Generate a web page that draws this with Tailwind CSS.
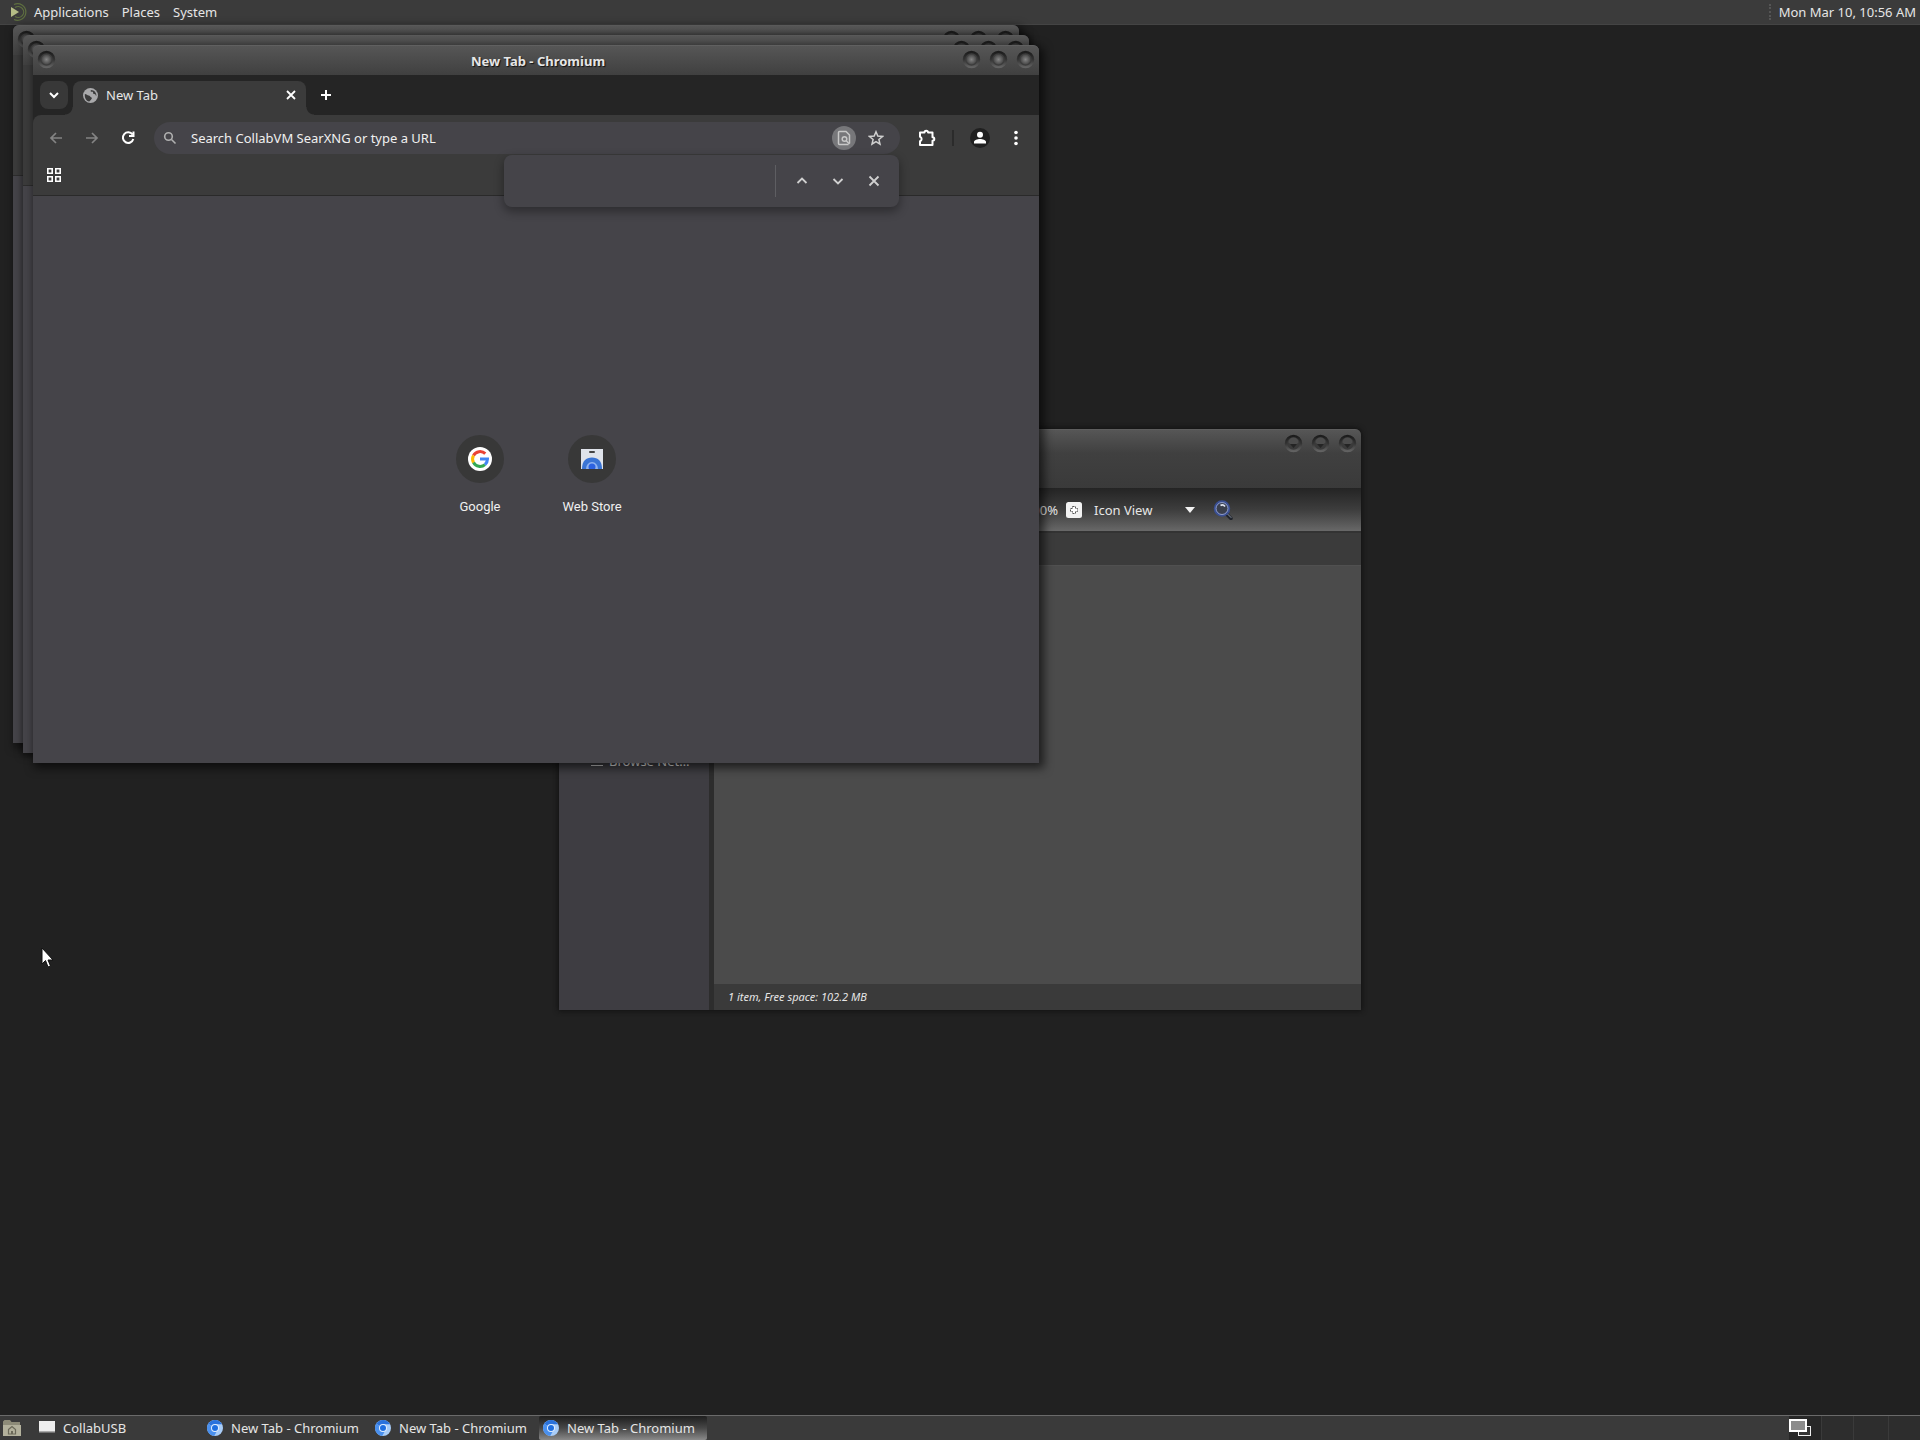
<!DOCTYPE html>
<html lang="en">
<head>
    <meta charset="UTF-8">
    <meta name="viewport" content="width=device-width, initial-scale=1.0">
    <title>Desktop</title>
    <script src="https://cdn.jsdelivr.net/npm/@tailwindcss/browser@4"></script>
</head>
<body class="h-screen flex flex-col overflow-hidden bg-[#212121] text-[#e6e6e6] text-[13px] leading-5 font-['Noto_Sans',sans-serif]">

    <!-- Shared shapes -->
    <svg class="absolute w-0 h-0">
        <defs>
            <linearGradient id="ring" x1="0" y1="0" x2="0" y2="1">
                <stop offset="0" stop-color="#1c1c1c"/>
                <stop offset="0.5" stop-color="#343434"/>
                <stop offset="1" stop-color="#626262"/>
            </linearGradient>
            <radialGradient id="knob">
                <stop offset="0" stop-color="#858585"/>
                <stop offset="1" stop-color="#474747"/>
            </radialGradient>
        </defs>
        <symbol id="window-button" viewBox="0 0 19 19">
            <circle cx="9.5" cy="9.5" r="7.5" fill="#3c3c3c" stroke="url(#ring)" stroke-width="2.5"/>
            <circle cx="9.5" cy="9.5" r="5" fill="url(#knob)"/>
        </symbol>
        <symbol id="window-button-idle" viewBox="0 0 19 19">
            <circle cx="9.5" cy="9.5" r="7.5" fill="#3a3a3a" stroke="url(#ring)" stroke-width="2.5"/>
            <path d="M4.5 8.5a5 5 0 0 1 10 0L9.5 13z" fill="#4c4c4c"/>
            <path d="M6 10h7l-3.500 4z" fill="#242424"/>
        </symbol>
        <symbol id="chromium" viewBox="0 0 16 16">
            <circle cx="8" cy="8" r="8" fill="#a9cdf8"/>
            <path d="M8 8 1.200 3.800A8 8 0 0 1 15 4.200H8z" fill="#2a72dc"/>
            <path d="M1.200 3.800A8 8 0 0 0 7.200 16L10.500 10 8 8z" fill="#4a90ee"/>
            <circle cx="8" cy="8" r="4" fill="#e2eeff"/>
            <circle cx="8" cy="8" r="3" fill="#1f6fe0"/>
        </symbol>
    </svg>

    <!-- Top panel -->
    <header class="shrink-0 h-[25px] flex items-center justify-between pl-2.5 pr-1 bg-[#3b3b3b] border-b border-[#444]">
        <nav class="flex items-center gap-[13px]">
            <button class="flex items-center gap-1.5">
                <svg class="w-[18px] h-[18px]" viewBox="0 0 18 18" fill="none">
                    <path d="M4 1.500a8.300 8.300 0 1 1 0 15" stroke="#5f7040" stroke-width="1.200"/>
                    <path d="M5 4.500a5.500 5.500 0 1 1 0 9" stroke="#5f7040" stroke-width="1.200"/>
                    <path d="M1 4v10l8-5z" fill="#b5bd86"/>
                </svg>
                <span>Applications</span>
            </button>
            <button>Places</button>
            <button>System</button>
        </nav>
        <div class="flex items-center gap-2">
            <span class="w-0.5 h-4 border-l-2 border-dotted border-[#555]"></span>
            <time>Mon Mar 10, 10:56 AM</time>
        </div>
    </header>

    <!-- Desktop -->
    <main class="relative flex-1">

        <!-- File manager -->
        <section class="absolute left-[559px] top-[404px] w-[802px] h-[581px] flex flex-col overflow-hidden rounded-t-md bg-[#3b3b3b] shadow-[0_0_5px_1px_#111]">
            <div class="h-[59px] flex items-start justify-end gap-2 pt-1 pr-1 bg-linear-to-b from-[#565656] via-[#404040] via-40% to-[#3a3a3a] border-t border-[#5e5e5e]">
                <button aria-label="Minimize"><svg class="w-[19px] h-[19px]"><use href="#window-button-idle"/></svg></button>
                <button aria-label="Maximize"><svg class="w-[19px] h-[19px]"><use href="#window-button-idle"/></svg></button>
                <button aria-label="Close"><svg class="w-[19px] h-[19px]"><use href="#window-button-idle"/></svg></button>
            </div>
            <div class="h-[43px] flex items-center justify-end pr-32 bg-linear-to-b from-[#242424] via-[#3d3d3d] to-[#686868]">
                <span class="mr-2">100%</span>
                <button aria-label="Zoom in" class="mr-3">
                    <svg class="w-4 h-4" viewBox="0 0 16 16">
                        <rect width="16" height="16" rx="2.500" fill="#f2f2f2"/>
                        <path d="M6.500 4.500h3v2h2v3h-2v2h-3v-2h-2v-3h2z" fill="#fff" stroke="#555" stroke-dasharray="2 1"/>
                    </svg>
                </button>
                <button class="flex items-center justify-between w-[101px] mr-[18px]">
                    <span>Icon View</span>
                    <svg class="w-2.5 h-1.5" viewBox="0 0 10 6"><path d="M0 0h10L5 6z" fill="#f2f2f2"/></svg>
                </button>
                <button aria-label="Search">
                    <svg class="w-5 h-5" viewBox="0 0 20 20" fill="none">
                        <path d="m13.500 14 4.500 4.500" stroke="#20242c" stroke-width="3.500" stroke-linecap="round"/>
                        <path d="m14 13.500 4 4" stroke="#8b93a3" stroke-linecap="round"/>
                        <circle cx="9" cy="8.500" r="7" fill="#3a3f4c" stroke="#3a4f92" stroke-width="2.500"/>
                        <circle cx="9" cy="8.500" r="6" stroke="#8f9cc8"/>
                        <path d="M7.500 5.500q2.500-1.500 4.500 1" stroke="#dfe4f2" stroke-width="1.800"/>
                    </svg>
                </button>
            </div>
            <div class="h-[34px] bg-[#3b3b3b] border-t-2 border-[#333]"></div>
            <div class="flex-1 flex">
                <aside class="w-[150px] pl-8 pt-[186px] bg-[#3e3d42]">
                    <a href="#" class="flex items-center gap-1.5">
                        <svg class="w-3 h-4" viewBox="0 0 12 16" stroke="#c4c4c4"><path d="M0 6.500h12M0 9.500h12M0 12.500h12"/></svg>
                        <span>Browse Net…</span>
                    </a>
                </aside>
                <div class="w-[5px] bg-[#2d2d2d]"></div>
                <div class="flex-1 flex flex-col">
                    <div class="flex-1 bg-[#4b4b4b] border-t border-[#505050]"></div>
                    <footer class="h-[26px] flex items-center pl-3.5 bg-[#3a3a3a] text-[11px] italic">1 item, Free space: 102.2 MB</footer>
                </div>
            </div>
        </section>

        <!-- Chromium windows at the back -->
        <section class="absolute left-[13px] top-0 w-[1006px] h-[718px] flex flex-col overflow-hidden rounded-t-md bg-[#454449] shadow-[3px_3px_8px_2px_#0008]">
            <div class="h-[30px] flex items-start justify-between px-1 pt-1 bg-linear-to-b from-[#565656] to-[#404040] border-t border-[#5a5a5a]">
                <svg class="w-[19px] h-[19px]"><use href="#window-button"/></svg>
                <div class="flex gap-2">
                    <svg class="w-[19px] h-[19px]"><use href="#window-button"/></svg>
                    <svg class="w-[19px] h-[19px]"><use href="#window-button"/></svg>
                    <svg class="w-[19px] h-[19px]"><use href="#window-button"/></svg>
                </div>
            </div>
            <div class="h-[121px] bg-[#3b3b3b] border-b border-[#2d2d2d]"></div>
        </section>
        <section class="absolute left-[23px] top-[10px] w-[1006px] h-[718px] flex flex-col overflow-hidden rounded-t-md bg-[#454449] shadow-[1px_1px_7px_2px_#0008]">
            <div class="h-[30px] flex items-start justify-between px-1 pt-1 bg-linear-to-b from-[#565656] to-[#404040] border-t border-[#5a5a5a]">
                <svg class="w-[19px] h-[19px]"><use href="#window-button"/></svg>
                <div class="flex gap-2">
                    <svg class="w-[19px] h-[19px]"><use href="#window-button"/></svg>
                    <svg class="w-[19px] h-[19px]"><use href="#window-button"/></svg>
                    <svg class="w-[19px] h-[19px]"><use href="#window-button"/></svg>
                </div>
            </div>
            <div class="h-[121px] bg-[#3b3b3b] border-b border-[#2d2d2d]"></div>
        </section>

        <!-- Chromium window in front -->
        <section class="absolute left-[33px] top-[20px] w-[1006px] h-[718px] flex flex-col rounded-t-md bg-[#454449] shadow-[3px_3px_10px_2px_#0009]">
            <div class="h-[30px] grid grid-cols-[1fr_auto_1fr] items-start px-1 pt-1 rounded-t-md bg-linear-to-b from-[#565656] to-[#404040] border-t border-[#606060]">
                <button aria-label="Window menu" class="justify-self-start"><svg class="w-[19px] h-[19px]"><use href="#window-button"/></svg></button>
                <h1 class="pl-1 font-bold text-[13px] leading-[22px] [text-shadow:1px_1px_1px_#111]">New Tab - Chromium</h1>
                <div class="flex justify-end gap-2">
                    <button aria-label="Minimize"><svg class="w-[19px] h-[19px]"><use href="#window-button"/></svg></button>
                    <button aria-label="Maximize"><svg class="w-[19px] h-[19px]"><use href="#window-button"/></svg></button>
                    <button aria-label="Close"><svg class="w-[19px] h-[19px]"><use href="#window-button"/></svg></button>
                </div>
            </div>

            <!-- Tab strip -->
            <div class="h-10 flex pl-[7px] bg-[#252525]">
                <button aria-label="Search tabs" class="self-center w-7 h-7 grid place-items-center rounded-lg bg-[#383838]">
                    <svg class="w-2.5 h-2.5" viewBox="0 0 10 10" fill="none" stroke="#fff" stroke-width="2"><path d="m1 3 4 4 4-4"/></svg>
                </button>
                <div class="self-end ml-[-3px] w-2 h-2 bg-[radial-gradient(circle_at_0_0,transparent_7px,#3b3b3b_8px)]"></div>
                <div class="self-end w-[233px] h-[34px] flex items-center px-2.5 pb-1.5 rounded-t-lg bg-[#3b3b3b]">
                    <svg class="w-[15px] h-[15px] mr-2" viewBox="0 0 16 16">
                        <circle cx="8" cy="8" r="8" fill="#a9a9ab"/>
                        <path d="M2 6.500c2 0 2.500 1.500 4 1.500s1.500 1.500 3 2-1 3-2.500 4.500C3.500 14 1.500 10.500 2 6.500zM8.500 2c-1 1.500 0 2 1.500 2s0 2.500 2 2.500 1 2 2.300 1.800C14.500 5 12 2 8.500 2z" fill="#3b3b3b"/>
                    </svg>
                    <span class="flex-1">New Tab</span>
                    <button aria-label="Close tab">
                        <svg class="w-2.5 h-2.5" viewBox="0 0 10 10" stroke="#fff" stroke-width="1.800"><path d="m1 1 8 8M9 1 1 9"/></svg>
                    </button>
                </div>
                <div class="self-end w-2 h-2 bg-[radial-gradient(circle_at_100%_0,transparent_7px,#3b3b3b_8px)]"></div>
                <button aria-label="New tab" class="ml-1.5 self-center">
                    <svg class="w-3 h-3" viewBox="0 0 12 12" stroke="#fff" stroke-width="2"><path d="M6 1v10M1 6h10"/></svg>
                </button>
            </div>

            <!-- Toolbar -->
            <div class="h-[46px] bg-[#252525]">
                <div class="h-full flex items-center px-[15px] rounded-tl-lg bg-[#3b3b3b]">
                    <button aria-label="Back" class="mr-5">
                        <svg class="w-4 h-4" viewBox="0 0 16 16" fill="none" stroke="#848484" stroke-width="1.700"><path d="M14 8H3M8 3 3 8l5 5"/></svg>
                    </button>
                    <button aria-label="Forward" class="mr-5">
                        <svg class="w-4 h-4" viewBox="0 0 16 16" fill="none" stroke="#848484" stroke-width="1.700"><path d="M2 8h11M8 3l5 5-5 5"/></svg>
                    </button>
                    <button aria-label="Reload" class="mr-[18px]">
                        <svg class="w-4 h-4" viewBox="0 0 16 16" fill="none" stroke="#fff" stroke-width="2"><path d="M12.500 4.500A5.300 5.300 0 1 0 13.300 9M13.500 1.500V6H9"/></svg>
                    </button>
                    <div class="flex-1 h-8 flex items-center pl-[9px] pr-4 rounded-full bg-[#454449]">
                        <svg class="w-3.5 h-3.5 mr-3.5" viewBox="0 0 14 14" fill="none" stroke="#b0b0b0" stroke-width="1.600"><circle cx="5.500" cy="5.500" r="3.800"/><path d="m8.500 8.500 4 4"/></svg>
                        <input type="text" aria-label="Address and search bar" placeholder="Search CollabVM SearXNG or type a URL" class="flex-1 min-w-0 bg-transparent outline-none placeholder:text-[#f0f0f0]">
                        <button aria-label="Find in page" class="w-6 h-6 mr-3 grid place-items-center rounded-full bg-[#77777a]">
                            <svg class="w-4 h-4" viewBox="0 0 16 16" fill="none" stroke="#c8c8c8" stroke-width="1.500"><path d="M12.500 14.500h-9a1 1 0 0 1-1-1v-11a1 1 0 0 1 1-1H10L13.500 5v8.500"/><circle cx="8.500" cy="9" r="2.300"/><path d="m10 10.500 3.500 3.500"/></svg>
                        </button>
                        <button aria-label="Bookmark this tab">
                            <svg class="w-4 h-4" viewBox="0 0 16 16" fill="none" stroke="#d0d0d0" stroke-width="1.500"><path d="m8 1.800 1.800 4.300 4.700.4-3.600 3 1.100 4.600L8 11.600l-4 2.500 1.100-4.600-3.600-3 4.700-.4z"/></svg>
                        </button>
                    </div>
                    <button aria-label="Extensions" class="ml-[18px]">
                        <svg class="w-[18px] h-[18px]" viewBox="0 0 18 18" fill="none" stroke="#fff" stroke-width="2"><path d="M2 3.500h4.500a1.800 1.800 0 0 1 3.600 0H14.500v4.700a1.800 1.800 0 0 1 0 3.600V16H2v-3.800a2.300 2.300 0 0 0 0-4.400z" stroke-linejoin="round"/></svg>
                    </button>
                    <span class="w-0.5 h-4 ml-4 mr-4 bg-[#2b2b2b]"></span>
                    <button aria-label="Profile" class="mr-[18px]">
                        <svg class="w-5 h-5" viewBox="0 0 20 20"><circle cx="10" cy="10" r="10" fill="#202020"/><circle cx="10" cy="6.800" r="3" fill="#fff"/><path d="M4 15.500v-1.500c0-2 3.500-3 6-3s6 1 6 3v1.500z" fill="#fff"/></svg>
                    </button>
                    <button aria-label="Menu">
                        <svg class="w-4 h-4" viewBox="0 0 16 16" fill="#fff"><circle cx="8" cy="2.500" r="1.800"/><circle cx="8" cy="8" r="1.800"/><circle cx="8" cy="13.500" r="1.800"/></svg>
                    </button>
                </div>
            </div>

            <!-- Bookmarks bar -->
            <div class="h-[35px] flex items-start pl-3.5 pt-[7px] bg-[#3b3b3b] border-b border-[#2a2a2a]">
                <button aria-label="Apps">
                    <svg class="w-3.5 h-3.5" viewBox="0 0 14 14" fill="none" stroke="#fff" stroke-width="1.600"><path d="M.8.8h4.400v4.400H.8zM8.800.8h4.400v4.400H8.800zM.8 8.800h4.400v4.400H.8zM8.800 8.800h4.400v4.400H8.800z"/></svg>
                </button>
            </div>

            <!-- New tab page -->
            <div class="flex-1 flex items-start justify-center gap-16 pt-[239px] font-[Roboto,sans-serif] text-[13px] leading-4 text-[#f0f0f0]">
                <a href="#" class="w-12 flex flex-col items-center gap-4 whitespace-nowrap">
                    <span class="w-12 h-12 grid place-items-center rounded-full bg-[#383838]">
                        <svg class="w-6 h-6" viewBox="0 0 24 24">
                            <circle cx="12" cy="12" r="12" fill="#fff"/>
                            <g fill="none" stroke-width="3">
                                <path d="M5.500 8.500A7.500 7.500 0 0 1 17.300 6.700" stroke="#ea4335"/>
                                <path d="M5.500 15.700a7.500 7.500 0 0 1 0-7.200" stroke="#fbbc05"/>
                                <path d="M17 17.600A7.500 7.500 0 0 1 5.500 15.500" stroke="#34a853"/>
                                <path d="M12 12h7.500a7.500 7.500 0 0 1-2.500 5.600" stroke="#4285f4"/>
                            </g>
                        </svg>
                    </span>
                    <span>Google</span>
                </a>
                <a href="#" class="w-12 flex flex-col items-center gap-4 whitespace-nowrap">
                    <span class="w-12 h-12 grid place-items-center rounded-full bg-[#383838]">
                        <svg class="w-[22px] h-5" viewBox="0 0 22 20">
                            <path d="M0 0h22v20H0z" fill="#dfe3ea"/>
                            <rect x="8" y="2" width="6" height="2" rx="1" fill="#444"/>
                            <path d="M1 20C1 12 5 8.500 11 8.500S21 12 21 20z" fill="#3a74d4"/>
                            <path d="M5 20a6 7 0 0 1 12 0z" fill="#8fb3f0"/>
                            <circle cx="11" cy="18" r="3.500" fill="#2c62e0"/>
                        </svg>
                    </span>
                    <span>Web Store</span>
                </a>
            </div>

            <!-- Find bar -->
            <form class="absolute right-[140px] top-[110px] w-[395px] h-[52px] flex items-center pr-[19px] rounded-lg bg-[#454449] shadow-[0_4px_10px_1px_#0005]">
                <input type="text" aria-label="Find in page" class="flex-1 min-w-0 h-full px-4 bg-transparent outline-none">
                <span class="w-px h-8 mr-5 bg-[#5e5e62]"></span>
                <button type="button" aria-label="Previous" class="mr-6"><svg class="w-3 h-3" viewBox="0 0 12 12" fill="none" stroke="#d0d0d0" stroke-width="1.800"><path d="m1.500 8 4.500-4.500L10.500 8"/></svg></button>
                <button type="button" aria-label="Next" class="mr-6"><svg class="w-3 h-3" viewBox="0 0 12 12" fill="none" stroke="#d0d0d0" stroke-width="1.800"><path d="M1.500 4 6 8.500 10.500 4"/></svg></button>
                <button type="button" aria-label="Close find bar"><svg class="w-3 h-3" viewBox="0 0 12 12" stroke="#d0d0d0" stroke-width="1.800"><path d="m1.500 1.500 9 9M10.500 1.500l-9 9"/></svg></button>
            </form>
        </section>

        <!-- Mouse pointer -->
        <svg class="absolute left-[41px] top-[922px] w-3.5 h-[22px]" viewBox="0 0 14 22"><path d="M1 1v16l3.500-3.500L7 20l2.500-1-2.500-6h5z" fill="#fff" stroke="#111"/></svg>
    </main>

    <!-- Bottom panel -->
    <footer class="shrink-0 h-[25px] flex bg-[#3a3a3a] border-t border-[#6a6a6a]">
        <button aria-label="Home folder" class="w-[35px] pl-[3px]">
            <svg class="w-[18px] h-[18px]" viewBox="0 0 18 18">
                <path d="M0 2.500 1.500 1H7l1.500 2H17v13.500H0z" fill="#8d8b78"/>
                <path d="M0 6h18v11H0z" fill="#b3b19c"/>
                <path d="M5.500 10.500 9 7.500l3.500 3V15h-7z" fill="none" stroke="#6b6959" stroke-width="1.200"/>
                <path d="M8 12h2v3H8z" fill="#6b6959"/>
            </svg>
        </button>
        <button class="w-[168px] flex items-center gap-2 px-1">
            <svg class="w-4 h-4" viewBox="0 0 16 16"><rect y="1" width="16" height="10" fill="#eee"/><path d="M0 11h16v1.500H0z" fill="#aaa"/></svg>
            CollabUSB
        </button>
        <button class="w-[168px] flex items-center gap-2 px-1 whitespace-nowrap"><svg class="w-4 h-4 shrink-0"><use href="#chromium"/></svg>New Tab - Chromium</button>
        <button class="w-[168px] flex items-center gap-2 px-1 whitespace-nowrap"><svg class="w-4 h-4 shrink-0"><use href="#chromium"/></svg>New Tab - Chromium</button>
        <button class="w-[168px] flex items-center gap-2 px-1 whitespace-nowrap rounded-xs bg-linear-to-b from-[#1e1e1e] via-[#474747] to-[#8a8a8a]"><svg class="w-4 h-4 shrink-0"><use href="#chromium"/></svg>New Tab - Chromium</button>
        <!-- Workspace switcher -->
        <div class="ml-auto flex">
            <button aria-label="Workspace 1" class="w-8 bg-[#272727]">
                <svg class="w-[22px] h-[18px]" viewBox="0 0 22 18"><rect x="9.500" y="7.500" width="12" height="9" fill="#333" stroke="#eee"/><rect x="1" y="1" width="16" height="11" fill="#8c8c8c" stroke="#fff" stroke-width="2"/></svg>
            </button>
            <button aria-label="Workspace 2" class="w-8 bg-[#2d2d2d] border-l border-[#3a3a3a]"></button>
            <button aria-label="Workspace 3" class="w-[35px] bg-[#2d2d2d] border-l border-[#3a3a3a]"></button>
            <button aria-label="Workspace 4" class="w-8 bg-[#2d2d2d] border-l border-[#3a3a3a]"></button>
        </div>
    </footer>

</body>
</html>
